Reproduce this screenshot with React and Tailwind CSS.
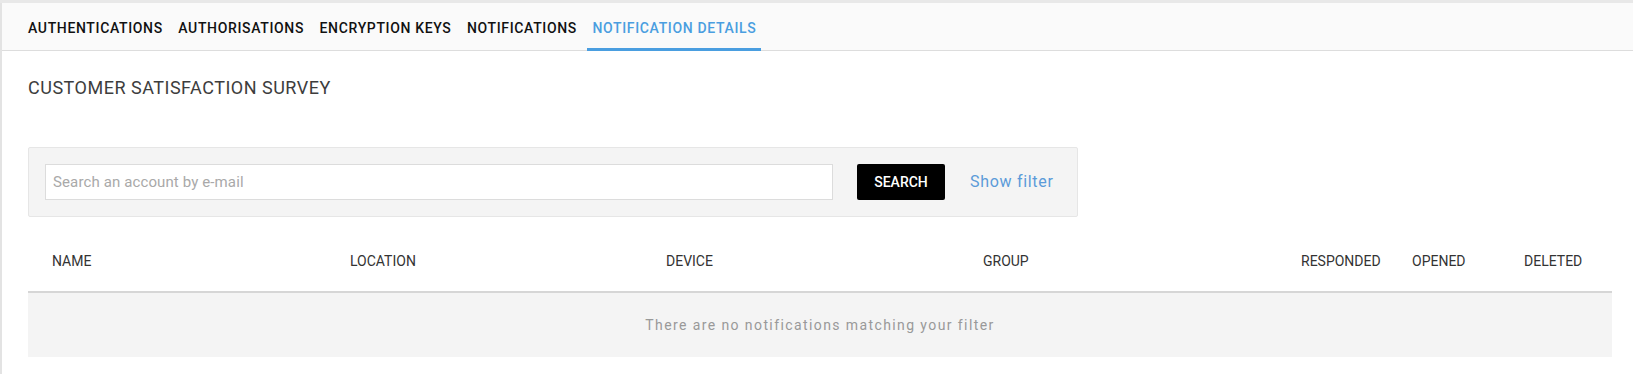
import React from "react";

const tabs = [
  { label: "AUTHENTICATIONS" },
  { label: "AUTHORISATIONS" },
  { label: "ENCRYPTION KEYS" },
  { label: "NOTIFICATIONS" },
  { label: "NOTIFICATION DETAILS", active: true },
];

const cols = ["NAME", "LOCATION", "DEVICE", "GROUP", "RESPONDED", "OPENED", "DELETED"];

export default function App() {
  return (
    <div className="w-[1633px] h-[374px] bg-white overflow-hidden font-['Roboto',_'Liberation_Sans',_sans-serif]">
      <div className="h-[3px] bg-[#e8e8e8]" />
      <div className="h-[371px] border-l-2 border-[#e3e3e3]">
        <nav className="h-[48px] bg-[#fafafa] border-b border-[#dddddd] flex items-start gap-[5.5px] pl-[21px]">
          {tabs.map((t) => (
            <div
              key={t.label}
              className={
                t.active
                  ? "h-[48px] -mb-px pt-[5px] px-[5px] flex items-center border-b-[3px] border-[#4a9ee0] text-[#4a9ee0] text-[14px] font-medium tracking-[0.65px]"
                  : "h-[48px] -mb-px pt-[5px] px-[5px] flex items-center border-b-[3px] border-transparent text-[#111111] text-[14px] font-medium tracking-[0.65px]"
              }
            >
              {t.label}
            </div>
          ))}
        </nav>

        <div className="pl-[26px] pr-[21px]">
          <h1 className="mt-[26px] text-[18px] leading-[22px] text-[#3d3d3d] tracking-[0.5px] font-normal">
            CUSTOMER SATISFACTION SURVEY
          </h1>

          <div className="mt-[48px] w-[1050px] bg-[#f4f4f4] border border-[#e6e6e6] rounded-[2px] p-4 flex items-center">
            <input
              type="text"
              placeholder="Search an account by e-mail"
              className="w-[788px] h-[36px] bg-white border border-[#dcdcdc] pl-[7px] text-[15px] tracking-[0.12px] text-[#333] placeholder:text-[#a9a9a9] outline-none"
            />
            <button className="ml-[24px] w-[88px] h-[36px] bg-black text-white rounded-[2px] text-[14px] font-medium">
              SEARCH
            </button>
            <span className="ml-[25px] text-[16px] text-[#5b9bd9] tracking-[0.7px]">Show filter</span>
          </div>

          <div className="mt-[14px] w-[1584px]">
            <div className="grid grid-cols-[298px_316px_317px_318px_111px_112px_112px] h-[60px] items-center border-b-2 border-[#d6d6d6] box-content">
              {cols.map((c) => (
                <div key={c} className="pl-6 text-[14px] text-[#333333]">
                  {c}
                </div>
              ))}
            </div>
            <div className="h-[64px] bg-[#f4f4f4] flex items-center justify-center text-[14px] text-[#999999] tracking-[1.4px]">
              There are no notifications matching your filter
            </div>
          </div>
        </div>
      </div>
    </div>
  );
}
